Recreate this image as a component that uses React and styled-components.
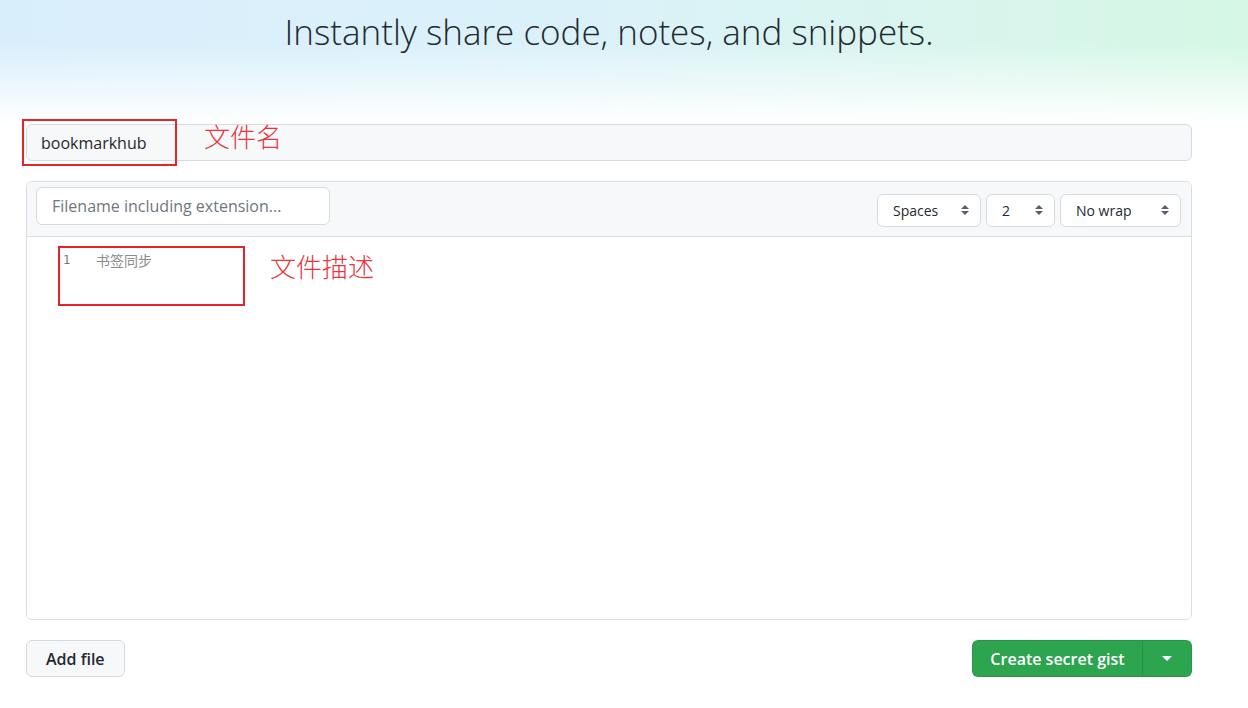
import React from "react";
import styled, { createGlobalStyle } from "styled-components";

const GlobalStyle = createGlobalStyle`
  body {
    margin: 0;
    background: #fff;
    font-family: "Open Sans", "Noto Sans", sans-serif;
    color: #24292f;
  }
`

const Hero = styled.div`
  height: 124px;
  background:
    linear-gradient(to bottom, rgba(255,255,255,0) 0%, rgba(255,255,255,0) 35%, #fff 100%),
    linear-gradient(to right, #d9eefb 0%, #dbf1fa 45%, #d9f5ee 75%, #d5f7e4 100%);
`

const Title = styled.h1`
  margin: 0;
  width: 1166px;
  margin-left: 26px;
  padding-top: 8px;
  text-align: center;
  font-family: "Open Sans", sans-serif;
  font-weight: 300;
  font-size: 35px;
  line-height: 48px;
  color: #24292f;
`

const Main = styled.div`
  width: 1166px;
  margin-left: 26px;
`

const Annotated = styled.div`
  position: relative;
`

const RedBox = styled.div`
  position: absolute;
  border: 2px solid #e5232b;
  pointer-events: none;
`

const RedNote = styled.span`
  position: absolute;
  color: #e8353d;
  font-family: "Noto Sans CJK SC", sans-serif;
  font-weight: 300;
  font-size: 26px;
  line-height: 30px;
  white-space: nowrap;
`

const DescInput = styled.div`
  height: 37px;
  box-sizing: border-box;
  border: 1px solid #d6dbe0;
  border-radius: 6px;
  background: #f6f8fa;
  padding: 0 14px;
  display: flex;
  align-items: center;
  font-size: 16px;
  color: #24292f;
`

const Editor = styled.div`
  margin-top: 20px;
  height: 439px;
  box-sizing: border-box;
  border: 1px solid #d8dee4;
  border-radius: 6px;
  display: flex;
  flex-direction: column;
  overflow: hidden;
`

const EditorHeader = styled.div`
  height: 54px;
  flex-shrink: 0;
  background: #f6f8fa;
  border-bottom: 1px solid #d8dee4;
  display: flex;
  align-items: center;
  padding: 0 10px 0 9px;
`

const FileInput = styled.div`
  align-self: flex-start;
  margin-top: 5px;
  width: 294px;
  height: 38px;
  box-sizing: border-box;
  background: #fff;
  border: 1px solid #d6dbe0;
  border-radius: 6px;
  padding: 0 15px;
  display: flex;
  align-items: center;
  font-size: 16px;
  color: #6e7781;
`

const Selects = styled.div`
  margin-left: auto;
  margin-top: 2px;
  display: flex;
  gap: 5px;
`

const Select = styled.div`
  width: ${p => p.w}px;
  height: 33px;
  box-sizing: border-box;
  background: #fff;
  border: 1px solid #d6dbe0;
  border-radius: 6px;
  padding: 0 10px 0 15px;
  display: flex;
  align-items: center;
  justify-content: space-between;
  font-size: 14px;
  color: #24292f;
`

const Code = styled.div`
  flex: 1;
  background: #fff;
  padding-top: 14px;
`

const Line = styled.div`
  display: flex;
  align-items: center;
  height: 18px;
`

const LineNo = styled.span`
  width: 69px;
  box-sizing: border-box;
  padding-left: 36px;
  font-family: "DejaVu Sans Mono", monospace;
  font-size: 12px;
  color: #6e7781;
`

const LineText = styled.span`
  font-family: "Noto Sans CJK SC", serif;
  font-size: 14px;
  color: #8c8c8c;
`

const Footer = styled.div`
  margin-top: 20px;
  display: flex;
  justify-content: space-between;
`

const Button = styled.div`
  height: 37px;
  box-sizing: border-box;
  padding: 0 19px;
  display: flex;
  align-items: center;
  border: 1px solid #d6dbe0;
  border-radius: 6px;
  background: #f6f8fa;
  font-weight: 600;
  font-size: 16px;
  color: #24292f;
`

const SplitButton = styled.div`
  display: flex;
  height: 37px;
  border-radius: 6px;
  overflow: hidden;
  background: #2da44e;
  border: 1px solid rgba(27,31,36,0.12);
  box-sizing: border-box;
  color: #fff;
  font-weight: 600;
  font-size: 16px;
`

const SplitMain = styled.div`
  width: 169px;
  display: flex;
  align-items: center;
  justify-content: center;
  border-right: 1px solid rgba(27,31,36,0.15);
`

const SplitCaret = styled.div`
  width: 48px;
  display: flex;
  align-items: center;
  justify-content: center;
`

const UpDown = () => (
  <svg width="10" height="14" viewBox="0 0 10 14">
    <path d="M1 6 L5 2 L9 6 Z" fill="#57606a" />
    <path d="M1 8 L5 12 L9 8 Z" fill="#57606a" />
  </svg>
)

const Caret = () => (
  <svg width="10" height="6" viewBox="0 0 10 6">
    <path d="M0 0 L10 0 L5 5 Z" fill="#fff" />
  </svg>
)

const App = () => {
  return (
    <>
      <GlobalStyle />
      <Hero>
        <Title>Instantly share code, notes, and snippets.</Title>
      </Hero>
      <Main>
        <Annotated>
          <DescInput>bookmarkhub</DescInput>
          <RedBox style={{ left: -4, top: -5, width: 151, height: 43 }} />
          <RedNote style={{ left: 178, top: -3 }}>文件名</RedNote>
        </Annotated>
        <Editor>
          <EditorHeader>
            <FileInput>Filename including extension...</FileInput>
            <Selects>
              <Select w={104}>Spaces<UpDown /></Select>
              <Select w={69}>2<UpDown /></Select>
              <Select w={121}>No wrap<UpDown /></Select>
            </Selects>
          </EditorHeader>
          <Code>
            <Annotated>
              <Line>
                <LineNo>1</LineNo>
                <LineText>书签同步</LineText>
              </Line>
              <RedBox style={{ left: 31, top: -5, width: 183, height: 56 }} />
              <RedNote style={{ left: 243, top: 0 }}>文件描述</RedNote>
            </Annotated>
          </Code>
        </Editor>
        <Footer>
          <Button>Add file</Button>
          <SplitButton>
            <SplitMain>Create secret gist</SplitMain>
            <SplitCaret><Caret /></SplitCaret>
          </SplitButton>
        </Footer>
      </Main>
    </>
  );
}

export default App;
